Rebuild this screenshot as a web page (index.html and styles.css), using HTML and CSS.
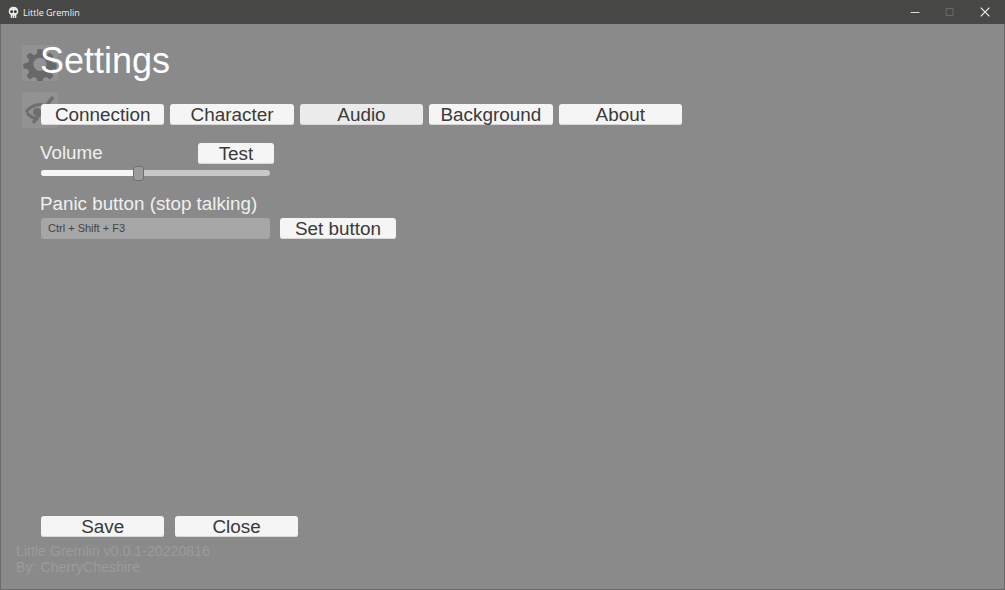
FILE: index.html
```html
<!DOCTYPE html>
<html lang="en">

<head>
    <meta charset="UTF-8">
    <title>Little Gremlin</title>
    <link rel="stylesheet" href="styles.css">
</head>

<body>
    <header class="titlebar">
        <svg class="app-icon" viewBox="0 0 12 12">
            <path d="M6 .8C3.200.8 1.600 2.600 1.600 5c0 1.400.6 2.400 1.800 3.100V11h5.200V8.100C9.800 7.400 10.400 6.400 10.400 5c0-2.400-1.600-4.200-4.400-4.200z" fill="#e8e8e8" />
            <circle cx="4.300" cy="5.200" r="1.300" fill="#333" />
            <circle cx="7.700" cy="5.200" r="1.300" fill="#333" />
            <path d="M5 11V9M7 11V9" stroke="#333" stroke-width=".6" />
        </svg>
        <span class="app-title">Little Gremlin</span>
        <div class="window-controls">
            <svg class="control" viewBox="0 0 36 24">
                <path d="M11 12.500h9" stroke="#e4e4e4" stroke-width="1" />
            </svg>
            <svg class="control" viewBox="0 0 36 24">
                <rect x="11.500" y="8.500" width="7" height="7" fill="none" stroke="#6d6d6b" stroke-width="1" />
            </svg>
            <svg class="control" viewBox="0 0 36 24">
                <path d="M11 7.500l9 9M20 7.500l-9 9" stroke="#f0f0f0" stroke-width="1.200" />
            </svg>
        </div>
    </header>

    <main class="window">
        <!-- Side icons sit behind the settings panel -->
        <div class="side-icon side-gear">
            <svg viewBox="0 0 36 36">
                <path fill="#686868" fill-rule="evenodd" d="M15 1h6l1 5.500 3.500 1.500 4.600-3.200 4.200 4.200-3.200 4.600 1.500 3.500 5.400 1v6l-5.400 1-1.500 3.500 3.200 4.600-4.200 4.200-4.600-3.200-3.500 1.500-1 5.400h-6l-1-5.400-3.500-1.500-4.600 3.200-4.200-4.200 3.200-4.600-1.500-3.500-5.400-1v-6l5.400-1 1.500-3.500-3.200-4.600 4.200-4.200L10.500 8 14 6.500zM18 11a8 8 0 1 0 0 16 8 8 0 0 0 0-16z" transform="translate(3 3.500) scale(.83)" />
            </svg>
        </div>
        <div class="side-icon side-eye">
            <svg viewBox="0 0 36 36">
                <path fill="none" stroke="#6e6e6e" stroke-width="3" d="M4 20c4-5 9-7.500 14-7.500 3 0 5 .6 7 1.600M5 21c3 3.500 7 5.500 11 6" />
                <circle cx="15" cy="20" r="4" fill="#6e6e6e" />
                <path fill="none" stroke="#6e6e6e" stroke-width="3.500" d="M11 31L31 5" />
            </svg>
        </div>

        <section class="panel">
            <h1 class="heading">Settings</h1>

            <nav class="tabs">
                <button class="btn tab">Connection</button>
                <button class="btn tab">Character</button>
                <button class="btn tab tab-active">Audio</button>
                <button class="btn tab">Background</button>
                <button class="btn tab">About</button>
            </nav>

            <div class="volume">
                <div class="volume-head">
                    <span class="field-label volume-label">Volume</span>
                    <button class="btn test-btn">Test</button>
                </div>
                <div class="slider">
                    <div class="slider-fill"></div>
                    <div class="slider-thumb"></div>
                </div>
            </div>

            <div class="panic">
                <div class="field-label">Panic button (stop talking)</div>
                <div class="panic-row">
                    <div class="key-input">Ctrl + Shift + F3</div>
                    <button class="btn set-btn">Set button</button>
                </div>
            </div>

            <div class="actions">
                <button class="btn tab">Save</button>
                <button class="btn tab">Close</button>
            </div>
        </section>

        <footer class="version">
            <div>Little Gremlin v0.0.1-20220816</div>
            <div>By: CherryCheshire</div>
        </footer>
    </main>
</body>

</html>
```

FILE: styles.css
```css
* {
    margin: 0;
    padding: 0;
    box-sizing: border-box;
}

html,
body {
    height: 100%;
    overflow: hidden;
}

body {
    font-family: 'Liberation Sans', Arial, sans-serif;
    background-color: #8a8a8a;
    display: flex;
    flex-direction: column;
}

/* Title bar */
.titlebar {
    display: flex;
    align-items: center;
    height: 24px;
    padding-left: 7px;
    background-color: #474745;
    color: #f2f2f2;
    flex-shrink: 0;
}

.app-icon {
    width: 13px;
    height: 13px;
}

.app-title {
    margin-left: 3px;
    font-family: 'Open Sans', sans-serif;
    font-size: 9px;
}

.window-controls {
    display: flex;
    margin-left: auto;
}

.control {
    width: 35px;
    height: 24px;
}

/* Window body */
.window {
    position: relative;
    flex: 1;
    display: flex;
    flex-direction: column;
    background-color: #8a8a8a;
    border: 1px solid #6a6a6a;
    border-top: 0;
}

.side-icon {
    position: absolute;
    left: 21px;
    width: 36px;
    height: 36px;
    background-color: #929292;
    border-radius: 3px;
}

.side-icon svg {
    display: block;
}

.side-gear {
    top: 21px;
}

.side-eye {
    top: 68px;
}

.panel {
    position: relative;
    flex: 1;
    display: flex;
    flex-direction: column;
    padding-left: 40px;
}

.heading {
    margin-top: 15px;
    margin-left: -1px;
    height: 44px;
    font-size: 36px;
    font-weight: 400;
    line-height: 44px;
    color: #ffffff;
}

.btn {
    height: 21px;
    border: 0;
    border-radius: 3px;
    background-color: #f5f5f5;
    color: #3a3a3a;
    font-family: inherit;
    font-size: 18.900px;
    line-height: 21px;
    box-shadow: inset 0 -1px 0 #d8d8d8;
}

.tabs {
    display: flex;
    gap: 6px;
    margin-top: 21px;
}

.tab {
    width: 123.400px;
}

.tab-active {
    background-color: #ebebeb;
}

.field-label {
    margin-left: -1px;
    color: #f0f0f0;
    font-size: 18.800px;
    line-height: 21px;
}

.volume-label {
    line-height: 19px;
}

.volume {
    width: 233px;
    margin-top: 18px;
}

.volume-head {
    display: flex;
    justify-content: space-between;
    align-items: flex-start;
}

.test-btn {
    width: 76px;
}

.slider {
    position: relative;
    width: 229px;
    height: 6px;
    margin-top: 6px;
    border-radius: 3px;
    background-color: #c8c8c8;
}

.slider-fill {
    width: 97px;
    height: 100%;
    border-radius: 3px 0 0 3px;
    background-color: #f5f5f5;
}

.slider-thumb {
    position: absolute;
    left: 92px;
    top: -4px;
    width: 11px;
    height: 15px;
    border-radius: 3px;
    border: 1px solid #707070;
    background-color: #9c9c9c;
}

.panic {
    margin-top: 17px;
}

.panic-row {
    display: flex;
    gap: 10px;
    margin-top: 4px;
}

.key-input {
    width: 229px;
    height: 21px;
    padding-left: 7px;
    border-radius: 3px;
    background-color: #a6a6a6;
    color: #444444;
    font-size: 11px;
    line-height: 21px;
}

.set-btn {
    width: 116px;
}

.actions {
    display: flex;
    gap: 10.500px;
    margin-top: auto;
    margin-bottom: 52px;
}

.version {
    position: absolute;
    left: 15px;
    bottom: 14px;
    color: #9b9b9b;
    font-size: 14.200px;
    line-height: 15.500px;
}
```
